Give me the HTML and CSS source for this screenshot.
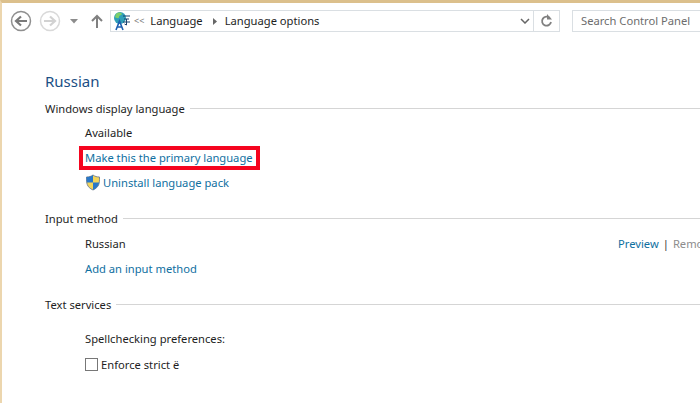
FILE: index.html
```html
<!DOCTYPE html>
<html lang="en">
<head>
    <meta charset="UTF-8">
    <title>Language options</title>
    <link rel="stylesheet" href="styles.css">
</head>
<body>
    <div class="window">
        <div class="toolbar">
            <svg class="nav-btn" width="24" height="24" viewBox="0 0 24 24">
                <circle cx="12" cy="12" r="9.500" fill="#fff" stroke="#8f8f8f" stroke-width="1.500"/>
                <path d="M18 12H8M12 7.500L7 12l5 4.500" fill="none" stroke="#7a7a7a" stroke-width="2.200"/>
            </svg>
            <svg class="nav-btn forward" width="24" height="24" viewBox="0 0 24 24">
                <circle cx="12" cy="12" r="9.500" fill="#fff" stroke="#d9d9d9" stroke-width="1.500"/>
                <path d="M6 12h10M12 7.500l5 4.500-5 4.500" fill="none" stroke="#d2d2d2" stroke-width="2.200"/>
            </svg>
            <svg class="history" width="8" height="5" viewBox="0 0 8 5"><path d="M0 0h8L4 4.500z" fill="#8c8c8c"/></svg>
            <svg class="up" width="12" height="14" viewBox="0 0 12 14">
                <path d="M6 14V2M1 7l5-5 5 5" fill="none" stroke="#808080" stroke-width="2"/>
            </svg>
            <div class="address">
                <svg class="lang-icon" width="18" height="20" viewBox="0 0 18 20">
                    <circle cx="7" cy="7" r="6" fill="#2f9fb8"/>
                    <path d="M3 3c2-2 5-2 6 0-1 2-3 1-3 3S3 7 2 6z" fill="#7ccf6a"/>
                    <path d="M3 19L6.500 10 10 19M4.500 16h4" fill="none" stroke="#1c5fb0" stroke-width="1.600"/>
                    <path d="M10 5h7M11 8h5M13.500 8v6l-2-1M10 11h7" fill="none" stroke="#17406f" stroke-width="1"/>
                </svg>
                <span class="crumb-more">&lt;&lt;</span>
                <span class="crumb">Language</span>
                <svg class="crumb-sep" width="4" height="7" viewBox="0 0 4 7"><path d="M0 0l4 3.500L0 7z" fill="#666"/></svg>
                <span class="crumb crumb-last">Language options</span>
                <svg class="chevron" width="10" height="6" viewBox="0 0 10 6"><path d="M1 1l4 4 4-4" fill="none" stroke="#666" stroke-width="1.500"/></svg>
                <div class="refresh">
                    <svg width="13" height="14" viewBox="0 0 13 14">
                        <path d="M9.800 4A4.500 4.500 0 1 0 11 8" fill="none" stroke="#808080" stroke-width="1.800"/>
                        <path d="M7 0v5.500h5z" fill="#808080"/>
                    </svg>
                </div>
            </div>
            <div class="search">Search Control Panel</div>
        </div>

        <div class="content">
            <h1 class="title">Russian</h1>

            <div class="group-head"><span>Windows display language</span><hr></div>
            <div class="row first">Available</div>
            <div class="row"><a class="link primary">Make this the primary language</a></div>
            <div class="row shield-row">
                <svg width="16" height="17" viewBox="0 0 16 17">
                    <path d="M8 1c2 1.500 4 2 6.500 2 0 6 0 10-6.500 13C1.500 13 1.500 9 1.500 3 4 3 6 2.500 8 1z" fill="#f4d65a" stroke="#7c8794"/>
                    <path d="M8 1c-2 1.500-4 2-6.500 2 0 2 0 3.500.3 5.500H8zM8 8.500V16c3.500-1.500 5.500-3.800 6.200-7.500z" fill="#2a78c8"/>
                </svg>
                <a class="link">Uninstall language pack</a>
            </div>

            <div class="group-head gap-input"><span>Input method</span><hr></div>
            <div class="row method">
                <span>Russian</span>
                <div class="method-actions"><a class="link">Preview</a><span class="pipe">|</span><span class="muted">Remove</span></div>
            </div>
            <div class="row"><a class="link">Add an input method</a></div>

            <div class="group-head gap-text"><span>Text services</span><hr></div>
            <div class="row spell">Spellchecking preferences:</div>
            <label class="row check-row"><span class="checkbox"></span>Enforce strict ё</label>
        </div>
    </div>
</body>
</html>
```

FILE: styles.css
```css
html, body {
    margin: 0;
    height: 100%;
    overflow: hidden;
}
body {
    font-family: "Noto Sans", "Open Sans", sans-serif;
    font-size: 11.2px;
    color: #1e1e1e;
    background-color: #fff;
}
.window {
    height: 100%;
    box-sizing: border-box;
    border-top: 3px solid #dcc08c;
    border-left: 2px solid #ecd6ae;
}
.toolbar {
    display: flex;
    align-items: center;
    height: 22px;
    padding: 7px 0 0 7px;
}
.nav-btn {
    flex: none;
}
.forward {
    margin-left: 5px;
}
.history {
    flex: none;
    margin-left: 8px;
}
.up {
    flex: none;
    margin-left: 13px;
}
.address {
    display: flex;
    align-items: center;
    flex: none;
    box-sizing: border-box;
    width: 450px;
    height: 22px;
    margin-left: 7px;
    border: 1px solid #dadfe3;
}
.lang-icon {
    margin-left: 2px;
}
.crumb-more {
    margin-left: 3px;
    padding-bottom: 2px;
    font-size: 9px;
    color: #777;
}
.crumb {
    margin-left: 6px;
    padding-bottom: 2px;
    color: #1e1e1e;
}
.crumb-sep {
    margin-left: 10px;
}
.crumb-last {
    margin-left: 8px;
}
.chevron {
    margin-left: auto;
    margin-right: 3px;
}
.refresh {
    display: flex;
    align-items: center;
    justify-content: center;
    width: 25px;
    height: 20px;
    border-left: 1px solid #dadfe3;
}
.search {
    flex: none;
    box-sizing: border-box;
    width: 140px;
    height: 22px;
    line-height: 19px;
    margin-left: 12px;
    padding-left: 8px;
    border: 1px solid #dadfe3;
    color: #6d6d6d;
    white-space: nowrap;
    overflow: hidden;
}
.content {
    padding: 0 0 0 43px;
}
.title {
    margin: 38px 0 0;
    font-size: 15px;
    font-weight: 400;
    line-height: 22px;
    color: #1b4f85;
}
.group-head {
    display: flex;
    align-items: center;
    height: 18px;
    margin-top: 7px;
}
.group-head hr {
    flex: 1;
    margin: 0 0 0 5px;
    border: none;
    border-top: 1px solid #d5d5d5;
}
.gap-input {
    margin-top: 14px;
}
.gap-text {
    margin-top: 14px;
}
.row {
    display: flex;
    align-items: center;
    height: 25px;
    padding-left: 40px;
}
.first {
    margin-top: 3px;
}
.link {
    color: #0f6f9f;
}
.primary {
    display: block;
    height: 16px;
    line-height: 16px;
    margin-left: -2px;
    padding: 0 3px 0 2px;
    outline: 4px solid #f5051f;
}
.shield-row svg {
    margin-right: 2px;
}
.method {
    justify-content: space-between;
    margin-top: 4px;
}
.method-actions {
    width: 82px;
    white-space: nowrap;
    overflow: hidden;
}
.pipe {
    margin: 0 4px;
    color: #333;
}
.muted {
    color: #8d8d8d;
}
.spell {
    margin-top: 13px;
}
.check-row {
    height: 26px;
}
.checkbox {
    box-sizing: border-box;
    width: 13px;
    height: 13px;
    margin-right: 3px;
    border: 1px solid #777;
    background-color: #fff;
}
```
